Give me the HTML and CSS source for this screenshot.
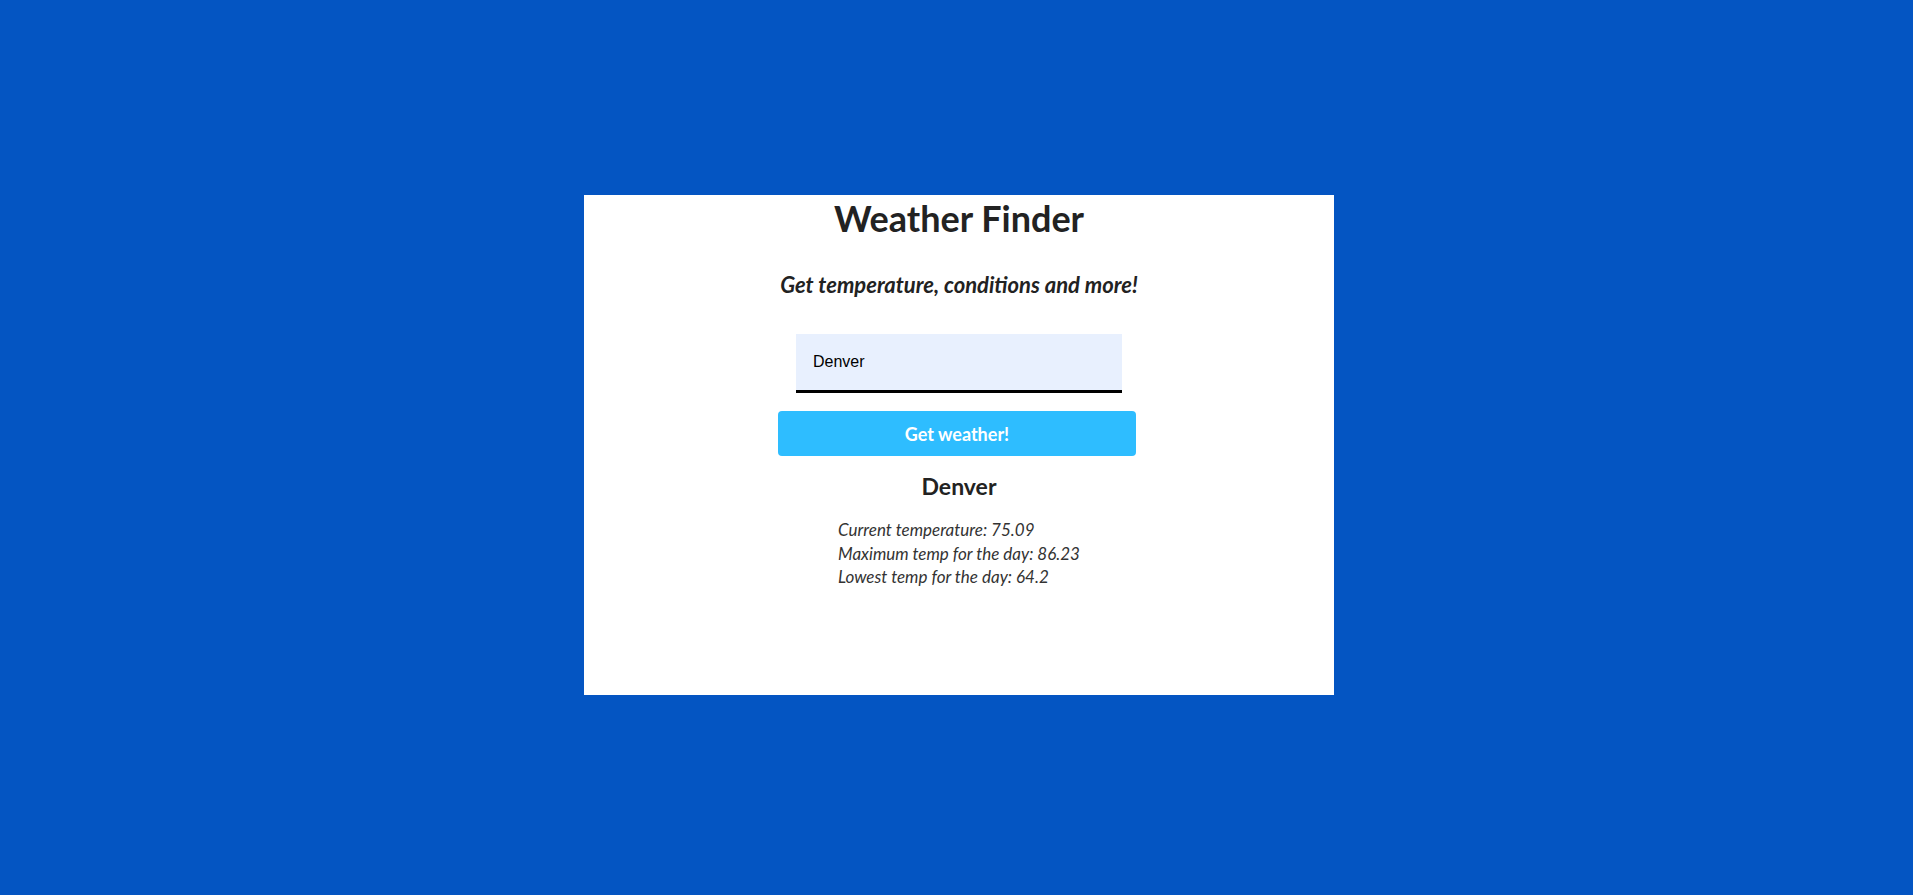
FILE: index.html
```html
<!DOCTYPE html>
<html lang="en">
<head>
<meta charset="utf-8">
<title>Weather Finder</title>
<link rel="stylesheet" href="styles.css">
</head>
<body>
<main class="card">
  <h1 class="title">Weather Finder</h1>
  <h3 class="subtitle">Get temperature, conditions and more!</h3>
  <form class="form">
    <input class="city-input" type="text" value="Denver">
    <button class="submit" type="button">Get weather!</button>
  </form>
  <section class="result">
    <h2 class="city">Denver</h2>
    <ul class="stats">
      <li>Current temperature: 75.09</li>
      <li>Maximum temp for the day: 86.23</li>
      <li>Lowest temp for the day: 64.2</li>
    </ul>
  </section>
</main>
</body>
</html>
```

FILE: styles.css
```css
html, body {
  margin: 0;
  height: 100%;
}
body {
  background: #0455c2;
  font-family: Lato, "Open Sans", sans-serif;
  padding: 195px 0 0 5px;
  box-sizing: border-box;
}
.card {
  width: 750px;
  height: 500px;
  margin: 0 auto;
  background: #ffffff;
  box-sizing: border-box;
  padding-top: 3px;
  display: flex;
  flex-direction: column;
  align-items: center;
  color: #222222;
}
.title {
  margin: 0;
  font-size: 36px;
  line-height: 41px;
  font-weight: 700;
}
.subtitle {
  margin: 34px 0 0;
  font-size: 22px;
  line-height: 24px;
  font-weight: 700;
  font-style: italic;
}
.form {
  margin-top: 37px;
  display: flex;
  flex-direction: column;
  align-items: center;
}
.city-input {
  width: 326px;
  height: 59px;
  box-sizing: border-box;
  border: none;
  border-bottom: 3px solid #000000;
  background: #e8f0fe;
  padding: 0 17px;
  font-family: "Liberation Sans", Arial, sans-serif;
  font-size: 16px;
  color: #000000;
  outline: none;
}
.submit {
  margin: 18px 4px 0 0;
  width: 358px;
  height: 45px;
  border: none;
  border-radius: 4px;
  background: #2ebdff;
  color: #ffffff;
  font-family: Lato, sans-serif;
  font-weight: 700;
  font-size: 18px;
  padding: 0;
}
.result {
  margin-top: 17px;
  display: flex;
  flex-direction: column;
  align-items: center;
}
.city {
  margin: 0;
  font-size: 23px;
  line-height: 27px;
  font-weight: 700;
}
.stats {
  margin: 18px 0 0;
  padding: 0;
  list-style: none;
  font-style: italic;
  font-size: 17px;
  line-height: 23.5px;
  color: #333333;
  text-align: left;
}
```
